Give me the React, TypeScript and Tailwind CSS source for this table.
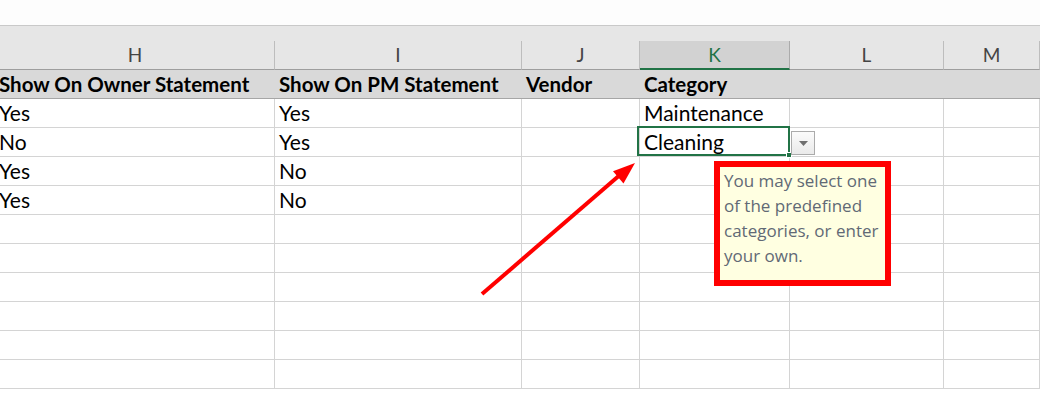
import React from "react";

const COLS = "grid grid-cols-[279px_247px_118px_150px_154px_1fr] -ml-1";

const letters = ["H", "I", "J", "K", "L", "M"];
const headings = ["Show On Owner Statement", "Show On PM Statement", "Vendor", "Category", "", ""];

const rows: string[][] = [
  ["Yes", "Yes", "", "Maintenance", "", ""],
  ["No", "Yes", "", "Cleaning", "", ""],
  ["Yes", "No", "", "", "", ""],
  ["Yes", "No", "", "", "", ""],
  ["", "", "", "", "", ""],
  ["", "", "", "", "", ""],
  ["", "", "", "", "", ""],
  ["", "", "", "", "", ""],
  ["", "", "", "", "", ""],
  ["", "", "", "", "", ""],
];

function SelectedCell({ text }: { text: string }) {
  return (
    <div className="relative h-[29px] border-r border-b border-[#d4d4d4] pl-[4px] text-[21px] leading-[28px] text-black whitespace-nowrap">
      {text}
      {/* active cell frame and fill handle */}
      <div className="absolute -left-[3px] -top-[2px] -right-[1px] bottom-0 border-2 border-[#217346]" />
      <div className="absolute -right-[3px] -bottom-[2px] w-[6px] h-[6px] bg-[#217346] border border-white" />
      {/* in-cell list button */}
      <div className="absolute left-[151px] top-[3px] w-[24px] h-[24px] border border-[#ababab] bg-gradient-to-b from-[#fbfbfb] to-[#eaeaea] flex items-center justify-center">
        <svg width="9" height="5" viewBox="0 0 9 5">
          <path d="M0 0 H9 L4.5 5 Z" fill="#6f6f6f" />
        </svg>
      </div>
    </div>
  );
}

export default function App() {
  return (
    <div className="relative w-[1040px] h-[395px] overflow-hidden bg-white font-['Lato',sans-serif]">
      {/* ribbon edge */}
      <div className="h-[26px] bg-[#fdfdfd] border-b border-[#c9c9c9]" />
      <div className="h-[15px] bg-[#e6e6e6]" />

      {/* column letters */}
      <div className={`${COLS} bg-[#e6e6e6]`}>
        {letters.map((l) =>
          l === "K" ? (
            <div
              key={l}
              className="h-[29px] bg-[#d2d2d2] border-r border-[#ababab] border-b-2 border-b-[#217346] flex justify-center text-[19px] leading-[27px] text-[#217346]"
            >
              {l}
            </div>
          ) : (
            <div
              key={l}
              className="h-[29px] border-r border-[#bdbdbd] border-b border-b-[#9e9e9e] flex justify-center text-[19px] leading-[28px] text-[#444444]"
            >
              {l}
            </div>
          )
        )}
      </div>

      {/* header row */}
      <div className={`${COLS} bg-[#d9d9d9] border-b border-[#a6a6a6]`}>
        {headings.map((h, i) => (
          <div
            key={i}
            className={`h-[28px] font-bold text-[20.5px] leading-[28px] text-black whitespace-nowrap ${i === 0 ? "pl-[3px]" : "pl-[4px]"}`}
          >
            {h}
          </div>
        ))}
      </div>

      {/* data rows */}
      {rows.map((r, ri) => (
        <div key={ri} className={COLS}>
          {r.map((c, ci) =>
            ri === 1 && ci === 3 ? (
              <SelectedCell key={ci} text={c} />
            ) : (
              <div
                key={ci}
                className={`h-[29px] border-r border-b border-[#d4d4d4] text-[21px] leading-[28px] text-black whitespace-nowrap ${ci === 0 ? "pl-[3px]" : "pl-[4px]"}`}
              >
                {c}
              </div>
            )
          )}
        </div>
      ))}

      {/* input message */}
      <div className="absolute left-[714px] top-[161px] w-[177px] h-[125px] border-[6px] border-[#ff0000] bg-[#ffffe1] pl-[4px] pt-[1px] font-['Open_Sans',sans-serif] text-[17px] leading-[25px] text-[#616975] whitespace-nowrap">
        You may select one
        <br />
        of the predefined
        <br />
        categories, or enter
        <br />
        your own.
      </div>

      {/* pointer arrow */}
      <svg className="absolute inset-0 pointer-events-none" width="1040" height="395">
        <line x1="482" y1="294" x2="621" y2="174" stroke="#ff0000" strokeWidth="4" />
        <polygon points="635,163 623.5,183.5 613,171.3" fill="#ff0000" />
      </svg>
    </div>
  );
}
